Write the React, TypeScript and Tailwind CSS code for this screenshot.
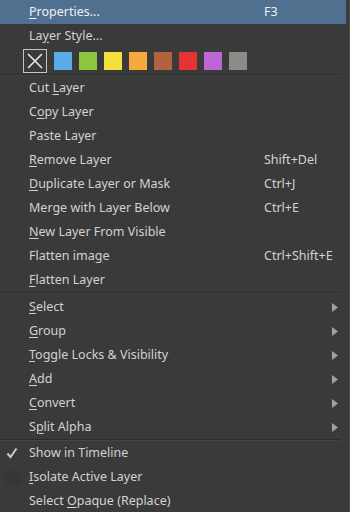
type Item = {
  label: string;
  u?: number;
  shortcut?: string;
  sub?: boolean;
  checked?: boolean;
  box?: boolean;
};

const swatches = ["#58aee4", "#8dc63f", "#f3e03d", "#f6a93c", "#b2623e", "#e63232", "#bf66d5", "#8c8c86"];

const group1: Item[] = [
  { label: "Cut Layer", u: 4 },
  { label: "Copy Layer", u: 1 },
  { label: "Paste Layer" },
  { label: "Remove Layer", u: 0, shortcut: "Shift+Del" },
  { label: "Duplicate Layer or Mask", u: 0, shortcut: "Ctrl+J" },
  { label: "Merge with Layer Below", shortcut: "Ctrl+E" },
  { label: "New Layer From Visible", u: 0 },
  { label: "Flatten image", u: 11, shortcut: "Ctrl+Shift+E" },
  { label: "Flatten Layer", u: 0 },
];

const group2: Item[] = [
  { label: "Select", u: 0, sub: true },
  { label: "Group", u: 0, sub: true },
  { label: "Toggle Locks & Visibility", u: 0, sub: true },
  { label: "Add", u: 0, sub: true },
  { label: "Convert", u: 0, sub: true },
  { label: "Split Alpha", u: 1, sub: true },
];

const group3: Item[] = [
  { label: "Show in Timeline", checked: true },
  { label: "Isolate Active Layer", u: 0, box: true },
  { label: "Select Opaque (Replace)", u: 7 },
];

function Label({ text, u }: { text: string; u?: number }) {
  if (u === undefined) return <span>{text}</span>;
  return (
    <span>
      {text.slice(0, u)}
      <span className="underline underline-offset-2">{text[u]}</span>
      {text.slice(u + 1)}
    </span>
  );
}

function Row({ item, active }: { item: Item; active?: boolean }) {
  return (
    <div
      className={`relative flex h-[24px] items-center ${
        active ? "bg-[#50708f] text-[#eef2f6]" : "text-[#d2d2d2]"
      }`}
    >
      <div className="flex w-[29px] shrink-0 items-center justify-center">
        {item.checked && (
          <svg width="12" height="12" viewBox="0 0 12 12" className="ml-[-5px]">
            <path d="M1.5 6.5 L4.5 10 L10.5 1.5" fill="none" stroke="#c9c9c9" strokeWidth="2" />
          </svg>
        )}
        {item.box && <div className="ml-[-5px] h-[15px] w-[15px] bg-[#363636]" />}
      </div>
      <div className="w-[235px] shrink-0">
        <Label text={item.label} u={item.u} />
      </div>
      <div className="flex-1">{item.shortcut}</div>
      {item.sub && (
        <svg width="6" height="9" viewBox="0 0 6 9" className="mr-[8px]">
          <path d="M0 0 L6 4.5 L0 9 Z" fill="#a0a0a0" />
        </svg>
      )}
    </div>
  );
}

function Sep({ tall }: { tall?: boolean }) {
  return (
    <div className={`mr-[6px] flex flex-col ${tall ? "h-[3px]" : "h-[2px]"}`}>
      <div className="h-px bg-[#2d2d2d]" />
      <div className="h-px bg-[#444444]" />
    </div>
  );
}

export default function App() {
  return (
    <div
      className="h-[512px] w-[350px] overflow-hidden bg-[#3a3a3a] text-[12.5px]"
      style={{ fontFamily: '"Noto Sans", "Open Sans", sans-serif' }}
    >
      <div className="border-r border-[#4a4a4a] pr-[3px]">
        <Row item={{ label: "Properties...", u: 0, shortcut: "F3" }} active />
        <Row item={{ label: "Layer Style...", u: 2 }} />
        <div className="flex h-[26px] items-center gap-[7px] pl-[23px]">
          <div className="relative h-[24px] w-[24px] border border-[#c4c4c4]">
            <svg width="22" height="22" viewBox="0 0 22 22">
              <path d="M4 4 L18 18 M18 4 L4 18" stroke="#e6e6e6" strokeWidth="1.6" />
            </svg>
          </div>
          {swatches.map((c) => (
            <div key={c} className="h-[18px] w-[18px]" style={{ backgroundColor: c }} />
          ))}
        </div>
        <Sep />
        {group1.map((it) => (
          <Row key={it.label} item={it} />
        ))}
        <Sep tall />
        {group2.map((it) => (
          <Row key={it.label} item={it} />
        ))}
        <Sep />
        {group3.map((it) => (
          <Row key={it.label} item={it} />
        ))}
      </div>
    </div>
  );
}
